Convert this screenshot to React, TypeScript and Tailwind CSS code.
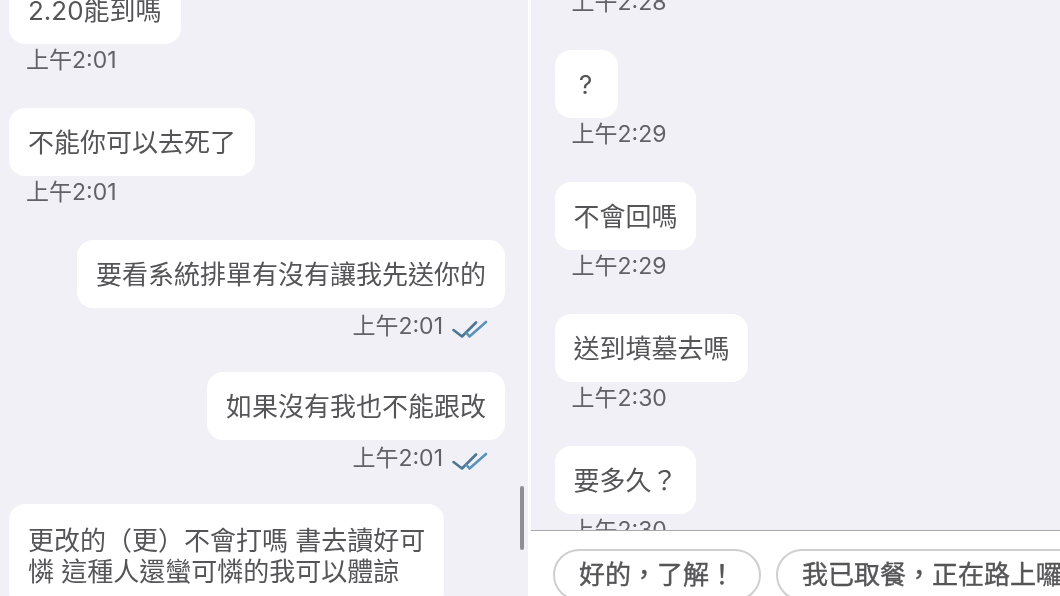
const FONT = "font-['Inter','Noto_Sans_CJK_TC',sans-serif]";

function Ticks() {
  return (
    <svg width="36" height="24" viewBox="0 0 36 24" fill="none" strokeLinecap="round" strokeLinejoin="round" className="ml-[9px] mt-[8px]">
      <path d="M1.5 14 L10 20.5 L24 6.5" stroke="#4f7690" strokeWidth="2.6" />
      <path d="M14.5 17 L17.5 20.5 L34 6" stroke="#5a93ba" strokeWidth="2.6" />
    </svg>
  );
}

function Incoming({ text, time, right = false, className = '' }: { text: string; time: string; right?: boolean; className?: string }) {
  return (
    <div className={`flex flex-col items-start mb-[32px] ${className}`}>
      <div className={`h-[68px] flex items-center bg-white rounded-[16px] text-[26px] text-[#555558] whitespace-nowrap ${right ? 'px-[18.5px]' : 'px-[19px]'}`}>
        {text}
      </div>
      <div className={`h-[32px] leading-[32px] text-[23px] text-[#626266] ${right ? 'pl-[16.5px]' : 'pl-[17px]'}`}>{time}</div>
    </div>
  );
}

function Outgoing({ text, time }: { text: string; time: string }) {
  return (
    <div className="flex flex-col items-end mb-[32px]">
      <div className="h-[68px] flex items-center bg-white rounded-[16px] px-[19px] text-[26px] text-[#555558] whitespace-nowrap">
        {text}
      </div>
      <div className="h-[32px] flex items-start pr-[17px]">
        <span className="mt-[2px] leading-[32px] text-[23px] text-[#626266]">{time}</span>
        <Ticks />
      </div>
    </div>
  );
}

export default function App() {
  return (
    <div className={`relative w-[1060px] h-[596px] flex gap-[3px] overflow-hidden bg-white blur-[0.4px] ${FONT}`}>
      {/* left conversation */}
      <div className="relative w-[528px] h-full bg-[#f0f0f6] overflow-hidden shrink-0">
        <div className="pl-[9px] pr-[23px] -mt-[24px]">
          <Incoming text="2.20能到嗎" time="上午2:01" />
          <Incoming text="不能你可以去死了" time="上午2:01" />
          <Outgoing text="要看系統排單有沒有讓我先送你的" time="上午2:01" />
          <Outgoing text="如果沒有我也不能跟改" time="上午2:01" />
          <div className="w-[435px] bg-white rounded-[16px] pl-[19px] pt-[21px] pb-[20px] text-[26px] leading-[31px] text-[#555558]">
            <div className="whitespace-nowrap">更改的（更）不會打嗎 書去讀好可</div>
            <div className="whitespace-nowrap">憐 這種人還蠻可憐的我可以體諒</div>
          </div>
        </div>
        <div className="absolute left-[520px] top-[486px] w-[4px] h-[64px] rounded-full bg-[#8e8e94]" />
      </div>

      {/* right conversation */}
      <div className="flex-1 min-w-0 h-full flex flex-col">
        <div className="h-[530px] bg-[#f0f0f6] overflow-hidden pl-[24px] shrink-0">
          <div className="h-[32px] leading-[32px] -mt-[14px] mb-[32px] pl-[16.5px] text-[23px] text-[#626266]">上午2:28</div>
          <Incoming right text="?" time="上午2:29" className="[&>div:first-child]:w-[63px] [&>div:first-child]:px-[24px]" />
          <Incoming right text="不會回嗎" time="上午2:29" />
          <Incoming right text="送到墳墓去嗎" time="上午2:30" />
          <Incoming right text="要多久？" time="上午2:30" />
        </div>
        <div className="h-px bg-[#a9a9ad] shrink-0" />
        <div className="flex-1 bg-white flex gap-[15px] pl-[22px] pt-[18px] overflow-hidden">
          <div className="shrink-0 h-[52px] leading-[48px] px-[24px] rounded-full border-2 border-[#cfcfd1] text-[26px] text-[#565658] [-webkit-text-stroke:0.4px_#565658] whitespace-nowrap">
            好的，了解！
          </div>
          <div className="shrink-0 h-[52px] leading-[48px] px-[24px] rounded-full border-2 border-[#cfcfd1] text-[26px] text-[#565658] [-webkit-text-stroke:0.4px_#565658] whitespace-nowrap">
            我已取餐，正在路上囉
          </div>
        </div>
      </div>
    </div>
  );
}
